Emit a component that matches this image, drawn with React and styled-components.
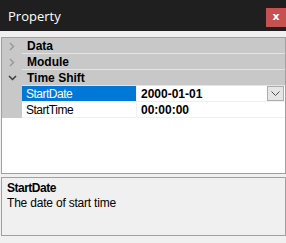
import styled, { createGlobalStyle } from 'styled-components';

const GlobalStyle = createGlobalStyle`
  html, body {
    margin: 0;
    padding: 0;
    background: #f0f0f0;
  }
  body {
    font-family: "Liberation Sans", Arial, sans-serif;
    font-size: 12px;
  }
`;

const categories = [
  { name: 'Data', open: false },
  { name: 'Module', open: false },
  {
    name: 'Time Shift',
    open: true,
    items: [
      { name: 'StartDate', value: '2000-01-01', selected: true },
      { name: 'StartTime', value: '00:00:00' },
    ],
  },
];

const Chevron = ({ open }) =>
  open ? (
    <svg width="9" height="6" viewBox="0 0 9 6">
      <path d="M1 1 L4.5 4.5 L8 1" fill="none" stroke="#3c3c3c" strokeWidth="1.5" />
    </svg>
  ) : (
    <svg width="6" height="9" viewBox="0 0 6 9">
      <path d="M1 1 L4.5 4.5 L1 8" fill="none" stroke="#9a9a9a" strokeWidth="1.5" />
    </svg>
  );

export default function App() {
  return (
    <>
      <GlobalStyle />
      <Window>
        <TitleBar>
          <Title>Property</Title>
          <CloseButton>x</CloseButton>
        </TitleBar>
        <Body>
          <Grid>
            {categories.map((cat) => (
              <div key={cat.name}>
                <CategoryRow>
                  <Margin>
                    <Chevron open={cat.open} />
                  </Margin>
                  <CategoryLabel>{cat.name}</CategoryLabel>
                </CategoryRow>
                {cat.open &&
                  cat.items.map((item) => (
                    <PropRow key={item.name}>
                      <Margin />
                      <NameCell $selected={item.selected}>{item.name}</NameCell>
                      <ValueCell>
                        <span>{item.value}</span>
                        {item.selected && (
                          <DropButton>
                            <svg width="9" height="5" viewBox="0 0 9 5">
                              <path d="M0.5 0.5 L4.5 4.5 L8.5 0.5" fill="none" stroke="#505050" strokeWidth="1" />
                            </svg>
                          </DropButton>
                        )}
                      </ValueCell>
                    </PropRow>
                  ))}
              </div>
            ))}
          </Grid>
          <Description>
            <DescTitle>StartDate</DescTitle>
            <DescText>The date of start time</DescText>
          </Description>
        </Body>
      </Window>
    </>
  );
}

const Window = styled.div`
  width: 286px;
  height: 243px;
  display: flex;
  flex-direction: column;
  background: #f0f0f0;
`;

const TitleBar = styled.div`
  height: 31px;
  background: #1f1f1f;
  display: flex;
  align-items: flex-start;
  justify-content: space-between;
`;

const Title = styled.div`
  color: #ffffff;
  font-family: "Open Sans", "Liberation Sans", sans-serif;
  font-size: 13px;
  padding: 7px 0 0 8px;
`;

const CloseButton = styled.div`
  margin-top: 8px;
  width: 20px;
  height: 19px;
  background: #c75050;
  color: #ffffff;
  font-family: "DejaVu Sans", sans-serif;
  font-weight: bold;
  font-size: 11px;
  display: flex;
  align-items: center;
  justify-content: center;
  line-height: 1;
  padding-bottom: 2px;
  box-sizing: border-box;
`;

const Body = styled.div`
  flex: 1;
  display: flex;
  flex-direction: column;
  gap: 3px;
  padding: 6px 0 6px 1px;
`;

const Grid = styled.div`
  height: 137px;
  width: 285px;
  box-sizing: border-box;
  border: 1px solid #a0a0a0;
  background: #ffffff;
`;

const CategoryRow = styled.div`
  display: flex;
  height: 16px;
  background: #c8c8c8;
`;

const Margin = styled.div`
  width: 20px;
  height: 16px;
  background: #c8c8c8;
  display: flex;
  align-items: center;
  justify-content: center;
  flex-shrink: 0;
`;

const CategoryLabel = styled.div`
  flex: 1;
  box-sizing: border-box;
  border-bottom: 1px solid #e4e4e4;
  font-weight: bold;
  color: #000000;
  padding: 2px 0 0 5px;
  line-height: 13px;
`;

const PropRow = styled.div`
  display: flex;
  height: 16px;
`;

const NameCell = styled.div`
  width: 115px;
  box-sizing: border-box;
  border-right: 1px solid #f0f0f0;
  border-bottom: 1px solid #f0f0f0;
  background: ${(p) => (p.$selected ? '#0078d7' : '#ffffff')};
  color: ${(p) => (p.$selected ? '#ffffff' : '#000000')};
  padding: 2px 0 0 4px;
  line-height: 13px;
  letter-spacing: -0.5px;
`;

const ValueCell = styled.div`
  flex: 1;
  box-sizing: border-box;
  border-bottom: 1px solid #f0f0f0;
  display: flex;
  align-items: flex-start;
  justify-content: space-between;
  padding-left: 4px;
  padding-right: 1px;
  font-weight: bold;
  span {
    padding-top: 2px;
    line-height: 13px;
  }
`;

const DropButton = styled.div`
  width: 17px;
  height: 15px;
  box-sizing: border-box;
  border: 1px solid #adadad;
  background: #e5e5e5;
  display: flex;
  align-items: center;
  justify-content: center;
`;

const Description = styled.div`
  height: 59px;
  width: 285px;
  box-sizing: border-box;
  border: 1px solid #a0a0a0;
  background: #f0f0f0;
  padding: 3px 0 0 5px;
`;

const DescTitle = styled.div`
  font-weight: bold;
  letter-spacing: -0.5px;
  line-height: 15px;
`;

const DescText = styled.div`
  line-height: 15px;
  letter-spacing: -0.2px;
`;
